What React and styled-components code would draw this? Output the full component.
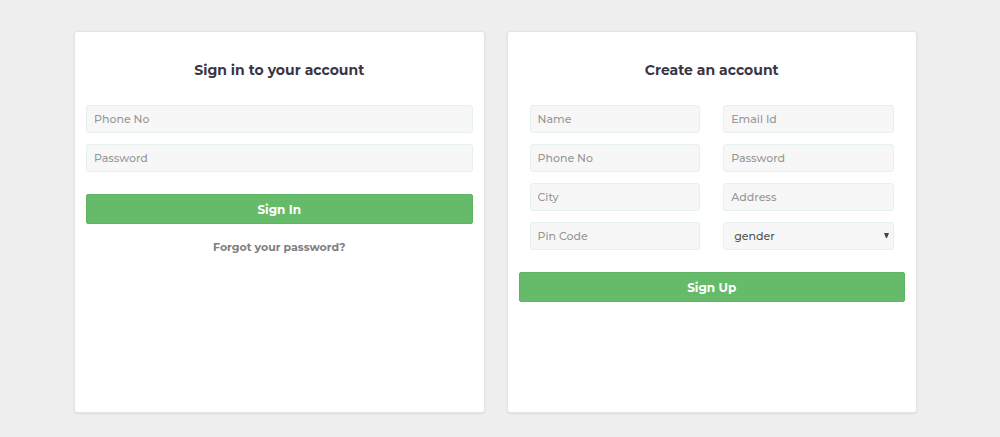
import React from "react";
import styled, { createGlobalStyle } from "styled-components";

const GlobalStyle = createGlobalStyle`
  *, *::before, *::after { box-sizing: border-box; }
  body {
    margin: 0;
    background: #eeeeee;
    font-family: Montserrat, Inter, "Open Sans", sans-serif;
    color: #3a3545;
  }
`;

const Page = styled.main`
  display: grid;
  grid-template-columns: repeat(auto-fit, minmax(min(320px, 100%), 1fr));
  gap: 22px;
  padding: 31px 83px 24px 74px;
`;

const Card = styled.section`
  min-height: 382px;
  padding: 28px 11px 12px;
  background: #ffffff;
  border: 1px solid #e4e4e4;
  border-radius: 3px;
  box-shadow: 0 1px 2px rgba(0, 0, 0, 0.08);
`;

const Title = styled.h1`
  margin: 0 0 25px;
  font-size: 14px;
  line-height: 20px;
  font-weight: 700;
  text-align: center;
  color: #3a3545;
`;

const Form = styled.form`
  display: flex;
  flex-direction: column;
  gap: 22px;
`;

const Fields = styled.div`
  display: grid;
  grid-template-columns: repeat(${(p) => p.$columns}, minmax(0, 1fr));
  gap: 11px 23px;
  padding: 0 ${(p) => (p.$columns > 1 ? 11 : 0)}px;
`;

const Control = styled.input`
  display: block;
  width: 100%;
  height: 28px;
  margin: 0;
  padding: 0 7px;
  background: #f7f7f7;
  border: 1px solid #e4f1ed;
  border-radius: 3px;
  color: #555555;
  font-family: inherit;
  font-size: 11px;
  font-weight: 500;
  &::placeholder {
    color: #989898;
    opacity: 1;
  }
  &:focus {
    outline: none;
    border-color: #66bb6a;
  }
`;

const SelectControl = styled(Control)`
  appearance: none;
  padding: 0 18px 0 10px;
`;

const SelectWrap = styled.div`
  position: relative;
`;

const Arrow = styled.svg`
  position: absolute;
  top: 11px;
  right: 5px;
  pointer-events: none;
`;

const SubmitButton = styled.button`
  width: 100%;
  height: 30px;
  padding: 0;
  background: #66bb6a;
  border: 1px solid #5db762;
  border-radius: 2px;
  color: #ffffff;
  font-family: inherit;
  font-size: 12px;
  font-weight: 700;
  cursor: pointer;
`;

const ForgotLink = styled.a`
  display: block;
  width: fit-content;
  margin: 14px auto 0;
  color: #808080;
  font-size: 11px;
  line-height: 18px;
  font-weight: 700;
  text-decoration: none;
`;

function Field({ label, type = "text" }) {
  return <Control type={type} placeholder={label} aria-label={label} />;
}

function GenderField() {
  return (
    <SelectWrap>
      <SelectControl as="select" aria-label="gender" defaultValue="">
        <option value="">gender</option>
        <option value="female">female</option>
        <option value="male">male</option>
      </SelectControl>
      <Arrow width="5" height="5" viewBox="0 0 5 5" aria-hidden="true">
        <path d="M0 0H5L3 5H2Z" fill="#444444" />
      </Arrow>
    </SelectWrap>
  );
}

const stay = (event) => event.preventDefault();

export default function App() {
  return (
    <>
      <GlobalStyle />
      <Page>
        <Card>
          <Title>Sign in to your account</Title>
          <Form onSubmit={stay}>
            <Fields $columns={1}>
              <Field label="Phone No" type="tel" />
              <Field label="Password" type="password" />
            </Fields>
            <SubmitButton type="submit">Sign In</SubmitButton>
          </Form>
          <ForgotLink href="#forgot">Forgot your password?</ForgotLink>
        </Card>
        <Card>
          <Title>Create an account</Title>
          <Form onSubmit={stay}>
            <Fields $columns={2}>
              <Field label="Name" />
              <Field label="Email Id" type="email" />
              <Field label="Phone No" type="tel" />
              <Field label="Password" type="password" />
              <Field label="City" />
              <Field label="Address" />
              <Field label="Pin Code" />
              <GenderField />
            </Fields>
            <SubmitButton type="submit">Sign Up</SubmitButton>
          </Form>
        </Card>
      </Page>
    </>
  );
}
